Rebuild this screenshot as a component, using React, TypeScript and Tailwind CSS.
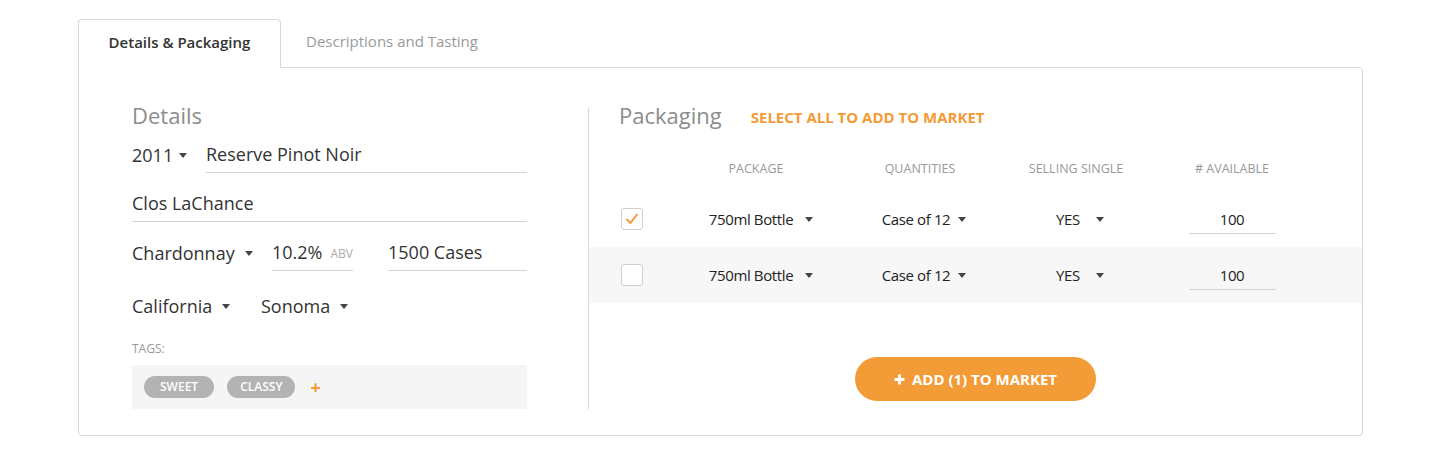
import React from "react"

const Caret = ({ className = "" }: { className?: string }) => (
  <svg width="8" height="5" viewBox="0 0 8 5" className={className}>
    <path d="M0 0 L8 0 L4 5 Z" fill="#444" />
  </svg>
)

const Select = ({ label, gap = "ml-2" }: { label: string; gap?: string }) => (
  <div className="flex items-center">
    <span>{label}</span>
    <Caret className={gap} />
  </div>
)

const rows = [
  { checked: true, bg: "bg-white" },
  { checked: false, bg: "bg-[#f7f7f7]" },
]

export default function App() {
  return (
    <div
      className="w-[1440px] h-[452px] bg-white pt-[19px]"
      style={{ fontFamily: '"Open Sans", "Liberation Sans", sans-serif' }}
    >
      <div className="ml-[78px] w-[1285px]">
        {/* tabs */}
        <div className="flex items-end">
          <div className="relative z-10 -mb-px h-[49px] w-[203px] pb-[4px] flex items-center justify-center bg-white border border-b-0 border-[#d9d9d9] rounded-t-[4px] text-[15px] font-semibold text-[#333]">
            Details & Packaging
          </div>
          <div className="h-[48px] pb-[4px] flex items-center px-[25px] text-[15px] text-[#999]">
            Descriptions and Tasting
          </div>
        </div>

        {/* panel */}
        <div className="border border-[#d9d9d9] rounded-b-[4px] rounded-tr-[4px] flex pl-[53px] pt-[33px] pb-[26px]">
          {/* details */}
          <div className="w-[395px] text-[18px] text-[#333]">
            <h2 className="h-[28px] leading-[28px] text-[22px] text-[#8c8c8c]">Details</h2>
            <div className="mt-[8px] flex items-end">
              <div className="h-[36px] flex items-center w-[74px]">
                <Select label="2011" gap="ml-[6px]" />
              </div>
              <div className="flex-1 h-[36px] flex items-center border-b border-[#d4d4d4]">
                Reserve Pinot Noir
              </div>
            </div>
            <div className="mt-[13px] h-[36px] flex items-center border-b border-[#d4d4d4]">
              Clos LaChance
            </div>
            <div className="mt-[13px] flex items-end">
              <div className="h-[36px] flex items-center w-[140px]">
                <Select label="Chardonnay" gap="ml-[10px]" />
              </div>
              <div className="h-[36px] w-[81px] flex items-center border-b border-[#d4d4d4]">
                <span>10.2%</span>
                <span className="ml-[8px] text-[12px] text-[#aaa] mt-[3px]">ABV</span>
              </div>
              <div className="ml-[35px] flex-1 h-[36px] flex items-center border-b border-[#d4d4d4]">
                1500 Cases
              </div>
            </div>
            <div className="h-[44px] mt-[13px] flex items-center">
              <div className="w-[129px]">
                <Select label="California" gap="ml-[10px]" />
              </div>
              <Select label="Sonoma" gap="ml-[10px]" />
            </div>
            <div className="mt-[13px] h-[16px] leading-[16px] text-[12px] text-[#999]">TAGS:</div>
            <div className="mt-[8px] h-[44px] bg-[#f5f5f5] flex items-center px-[12px] gap-[13px]">
              <span className="h-[22px] px-[16px] rounded-full bg-[#b3b3b3] text-white text-[12px] font-semibold flex items-center">
                SWEET
              </span>
              <span className="h-[22px] px-[13px] rounded-full bg-[#b3b3b3] text-white text-[12px] font-semibold flex items-center">
                CLASSY
              </span>
              <span className="ml-[2px] text-[#f39b36] text-[18px] font-bold leading-none">+</span>
            </div>
          </div>

          {/* packaging */}
          <div className="ml-[61px] mt-[7px] flex-1 flex flex-col border-l border-[#d9d9d9]">
            <div className="-mt-[7px] flex items-center pl-[30px] h-[28px]">
              <h2 className="text-[22px] text-[#8c8c8c] leading-[28px]">Packaging</h2>
              <span className="ml-[29px] mt-[4px] text-[15px] font-bold text-[#f39b36]">
                SELECT ALL TO ADD TO MARKET
              </span>
            </div>
            <div className="mt-[28px] grid grid-cols-[85px_164px_164px_148px_164px] h-[24px] items-center text-[12.5px] text-[#999]">
              <div />
              <div className="text-center">PACKAGE</div>
              <div className="text-center">QUANTITIES</div>
              <div className="text-center">SELLING SINGLE</div>
              <div className="text-center"># AVAILABLE</div>
            </div>
            <div className="mt-[10px]">
              {rows.map((r, i) => (
                <div
                  key={i}
                  className={`${r.bg} h-[56px] grid grid-cols-[85px_164px_164px_148px_164px] items-center text-[15px] text-[#222] tracking-tight`}
                >
                  <div className="pl-[32px]">
                    <div className="w-[22px] h-[22px] rounded-[3px] border border-[#cfcfcf] bg-white flex items-center justify-center">
                      {r.checked && (
                        <svg width="14" height="12" viewBox="0 0 14 12">
                          <path
                            d="M2 6.5 L5.5 10 L12 1.5"
                            fill="none"
                            stroke="#f39b36"
                            strokeWidth="2"
                            strokeLinecap="round"
                            strokeLinejoin="round"
                          />
                        </svg>
                      )}
                    </div>
                  </div>
                  <div className="flex justify-center pl-[10px]">
                    <Select label="750ml Bottle" gap="ml-[12px]" />
                  </div>
                  <div className="flex justify-center pl-[8px]">
                    <Select label="Case of 12" gap="ml-[8px]" />
                  </div>
                  <div className="flex justify-center pl-[8px]">
                    <Select label="YES" gap="ml-[16px]" />
                  </div>
                  <div className="flex justify-center">
                    <div className="w-[87px] h-[28px] mt-[2px] border-b border-[#d4d4d4] flex items-center justify-center">
                      100
                    </div>
                  </div>
                </div>
              ))}
            </div>
            <div className="mt-[54px] flex justify-center">
              <button className="h-[44px] w-[241px] rounded-full bg-[#f39b36] text-white text-[15px] font-bold flex items-center justify-center">
                <svg width="11" height="11" viewBox="0 0 11 11" className="mr-[7px]">
                  <path d="M5.5 0.5 V10.5 M0.5 5.5 H10.5" stroke="white" strokeWidth="3" />
                </svg>
                ADD (1) TO MARKET
              </button>
            </div>
          </div>
        </div>
      </div>
    </div>
  )
}
